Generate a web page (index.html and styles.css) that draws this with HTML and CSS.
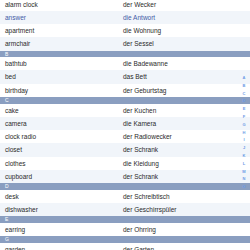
FILE: index.html
```html
<!DOCTYPE html>
<html>
<head>
<meta charset="utf-8">
<link rel="stylesheet" href="styles.css">
</head>
<body>
<div class="table">
  <div class="row"><span>alarm clock</span><span>der Wecker</span></div>
  <div class="row alt sel"><span>answer</span><span>die Antwort</span></div>
  <div class="row"><span>apartment</span><span>die Wohnung</span></div>
  <div class="row alt"><span>armchair</span><span>der Sessel</span></div>
  <div class="head">B</div>
  <div class="row"><span>bathtub</span><span>die Badewanne</span></div>
  <div class="row alt"><span>bed</span><span>das Bett</span></div>
  <div class="row"><span>birthday</span><span>der Geburtstag</span></div>
  <div class="head">C</div>
  <div class="row"><span>cake</span><span>der Kuchen</span></div>
  <div class="row alt"><span>camera</span><span>die Kamera</span></div>
  <div class="row"><span>clock radio</span><span>der Radiowecker</span></div>
  <div class="row alt"><span>closet</span><span>der Schrank</span></div>
  <div class="row"><span>clothes</span><span>die Kleidung</span></div>
  <div class="row alt"><span>cupboard</span><span>der Schrank</span></div>
  <div class="head">D</div>
  <div class="row"><span>desk</span><span>der Schreibtisch</span></div>
  <div class="row alt"><span>dishwasher</span><span>der Geschirrspüler</span></div>
  <div class="head">E</div>
  <div class="row"><span>earring</span><span>der Ohrring</span></div>
  <div class="head">G</div>
  <div class="row"><span>garden</span><span>der Garten</span></div>
</div>
<div class="index">
  <span>A</span><span>B</span><span>C</span><span>D</span><span>E</span><span>F</span><span>G</span><span>H</span><span>I</span><span>J</span><span>K</span><span>L</span><span>M</span><span>N</span><span>O</span>
</div>
</body>
</html>
```
FILE: styles.css
```css
html, body {
  margin: 0;
  padding: 0;
  width: 250px;
  height: 250px;
  overflow: hidden;
  background: #ffffff;
  font-family: "Liberation Sans", Arial, sans-serif;
}
.table {
  display: flex;
  flex-direction: column;
  margin-top: -2.4px;
}
.row {
  display: grid;
  grid-template-columns: 118px 1fr;
  height: 13.25px;
  line-height: 13.25px;
  padding-left: 5px;
  font-size: 6.5px;
  color: #2a2a2a;
  background: #ffffff;
  white-space: nowrap;
}
.row.alt {
  background: #f1f5fa;
}
.row.sel {
  color: #3f5aa6;
}
.head {
  height: 6.6px;
  line-height: 6.6px;
  padding-left: 5px;
  font-size: 5px;
  color: #ffffff;
  background: #8a9ec0;
}
.index {
  position: absolute;
  right: 0;
  top: 74px;
  width: 12px;
  display: flex;
  flex-direction: column;
  align-items: center;
}
.index span {
  height: 7.8px;
  line-height: 7.8px;
  font-size: 4px;
  font-weight: bold;
  color: #6d9be6;
}
```
